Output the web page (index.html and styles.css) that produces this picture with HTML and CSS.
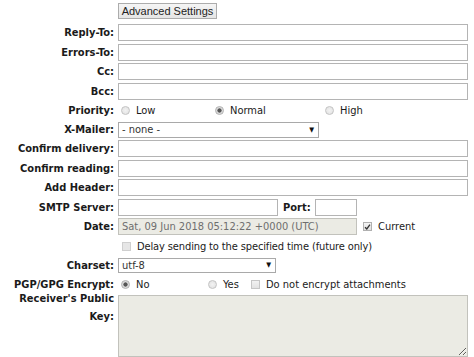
FILE: index.html
```html
<!DOCTYPE html>
<html>
<head>
<meta charset="utf-8">
<link rel="stylesheet" href="styles.css">
</head>
<body>
<form class="form">
  <div></div>
  <div class="field btn-row"><button type="button" class="btn">Advanced Settings</button></div>

  <label class="label">Reply-To:</label>
  <div class="field"><input class="text" type="text"></div>

  <label class="label">Errors-To:</label>
  <div class="field"><input class="text" type="text"></div>

  <label class="label">Cc:</label>
  <div class="field"><input class="text" type="text"></div>

  <label class="label">Bcc:</label>
  <div class="field"><input class="text" type="text"></div>

  <label class="label">Priority:</label>
  <div class="field opts">
    <span class="opt opt-low"><span class="radio"></span>Low</span>
    <span class="opt opt-normal"><span class="radio on"></span>Normal</span>
    <span class="opt"><span class="radio"></span>High</span>
  </div>

  <label class="label">X-Mailer:</label>
  <div class="field"><div class="select sel-mailer"><span>- none -</span><span class="arrow">&#9660;</span></div></div>

  <label class="label">Confirm delivery:</label>
  <div class="field"><input class="text" type="text"></div>

  <label class="label">Confirm reading:</label>
  <div class="field"><input class="text" type="text"></div>

  <label class="label">Add Header:</label>
  <div class="field"><input class="text" type="text"></div>

  <label class="label">SMTP Server:</label>
  <div class="field">
    <input class="text smtp" type="text">
    <span class="port-label">Port:</span>
    <input class="text port" type="text">
  </div>

  <label class="label">Date:</label>
  <div class="field">
    <input class="text date" type="text" value="Sat, 09 Jun 2018 05:12:22 +0000 (UTC)" readonly>
    <span class="opt current"><span class="check on"><svg width="8" height="8" viewBox="0 0 8 8"><path d="M1.2 4.2 L3.2 6.2 L6.8 1.4" fill="none" stroke="#333" stroke-width="1.5"/></svg></span>Current</span>
  </div>

  <div></div>
  <div class="field opts"><span class="opt delay"><span class="check dis"></span>Delay sending to the specified time (future only)</span></div>

  <label class="label">Charset:</label>
  <div class="field"><div class="select sel-charset"><span>utf-8</span><span class="arrow">&#9660;</span></div></div>

  <label class="label">PGP/GPG Encrypt:</label>
  <div class="field opts">
    <span class="opt opt-no"><span class="radio on"></span>No</span>
    <span class="opt opt-yes"><span class="radio"></span>Yes</span>
    <span class="opt"><span class="check"></span>Do not encrypt attachments</span>
  </div>

  <label class="label label-top">Receiver's Public Key:</label>
  <div class="field"><textarea class="area" readonly></textarea></div>
</form>
</body>
</html>
```
FILE: styles.css
```css
html, body {
  margin: 0;
  background: #fff;
}
body {
  font-family: "DejaVu Sans Condensed", "DejaVu Sans", sans-serif;
  font-size: 11px;
  color: #1a1a1a;
}
.form {
  display: grid;
  grid-template-columns: 110px 350px;
  column-gap: 4px;
  row-gap: 2.5px;
  padding: 3px 0 0 4px;
}
.label {
  font-weight: bold;
  text-align: right;
  align-self: center;
  line-height: 13px;
  color: #1a1a1a;
}
.label-top {
  align-self: start;
  line-height: 18px;
  margin-top: -5px;
}
.field {
  display: flex;
  align-items: center;
  min-height: 16px;
}
.btn-row {
  margin-bottom: 2.5px;
}
.btn {
  width: 99px;
  height: 16px;
  margin: 0;
  padding: 0;
  border: 1px solid #acacac;
  border-radius: 0;
  background: linear-gradient(#f5f5f5, #e5e5e5);
  font-family: "Liberation Sans", Arial, sans-serif;
  font-size: 11px;
  color: #222;
}
.text {
  width: 100%;
  height: 17px;
  box-sizing: border-box;
  margin: 0;
  padding: 0 3px;
  border: 1px solid #b4b4b4;
  border-radius: 0;
  background: #fff;
  font: inherit;
  color: #6e6e6e;
  outline: none;
}
.smtp {
  width: 160px;
}
.port-label {
  font-weight: bold;
  margin: 0 4px 0 5px;
}
.port {
  width: 42px;
}
.date {
  width: 239px;
  background: #ebebe4;
  border-color: #c2c2bc;
}
.opts {
  height: 17px;
}
.opt {
  display: inline-flex;
  align-items: center;
  white-space: nowrap;
}
.delay {
  letter-spacing: -0.12px;
}
.opt-low { width: 94px; }
.opt-normal { width: 110px; }
.opt-no { width: 87px; }
.opt-yes { width: 42px; }
.radio {
  width: 9px;
  height: 9px;
  box-sizing: border-box;
  margin: 0 6px 0 3px;
  border: 1px solid #c3c3c3;
  border-radius: 50%;
  background: radial-gradient(circle at 50% 50%, #f2f2f2 0, #e0e0e0 100%);
}
.radio.on {
  background: radial-gradient(circle at 50% 50%, #555 0, #555 1.8px, #d6d6d6 2.4px, #ececec 100%);
  border-color: #b0b0b0;
}
.check {
  width: 9px;
  height: 9px;
  box-sizing: border-box;
  margin: 0 6px 0 4px;
  border: 1px solid #c6c6c6;
  background: linear-gradient(#f2f2f2, #e2e2e2);
  display: inline-flex;
  align-items: center;
  justify-content: center;
}
.check.dis {
  border-color: #cfcfcf;
  background: #e6e6e6;
}
.check.on {
  border-color: #b0b0b0;
  background: linear-gradient(#f4f4f4, #e0e0e0);
}
.check svg {
  display: block;
}
.current {
  margin-left: 2px;
}
.select {
  height: 16px;
  box-sizing: border-box;
  border: 1px solid #a9a9a9;
  background: #fff;
  display: flex;
  align-items: center;
  justify-content: space-between;
  padding: 0 4px 0 3px;
  color: #333;
}
.sel-mailer { width: 201px; }
.sel-charset { width: 158px; height: 15px; }
.arrow {
  font-size: 7px;
  color: #111;
}
.area {
  width: 351px;
  height: 62px;
  box-sizing: border-box;
  margin: 0;
  border: 1px solid #c2c2bc;
  background: #ebebe4;
  font: inherit;
  outline: none;
}
```
